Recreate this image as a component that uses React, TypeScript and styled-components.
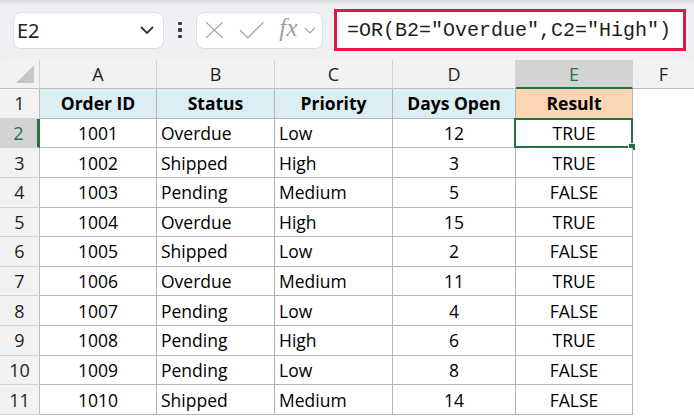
import React from 'react';
import styled, { createGlobalStyle, css } from 'styled-components';

const GlobalStyle = createGlobalStyle`
  body {
    margin: 0;
    background: #ffffff;
    overflow: hidden;
  }
`;

const green = '#217346';
const cellFont = `'Open Sans', 'Liberation Sans', sans-serif`;

type Align = 'left' | 'center';

interface Row {
  id: string;
  status: string;
  priority: string;
  days: number;
  result: string;
}

const rows: Row[] = [
  { id: '1001', status: 'Overdue', priority: 'Low', days: 12, result: 'TRUE' },
  { id: '1002', status: 'Shipped', priority: 'High', days: 3, result: 'TRUE' },
  { id: '1003', status: 'Pending', priority: 'Medium', days: 5, result: 'FALSE' },
  { id: '1004', status: 'Overdue', priority: 'High', days: 15, result: 'TRUE' },
  { id: '1005', status: 'Shipped', priority: 'Low', days: 2, result: 'FALSE' },
  { id: '1006', status: 'Overdue', priority: 'Medium', days: 11, result: 'TRUE' },
  { id: '1007', status: 'Pending', priority: 'Low', days: 4, result: 'FALSE' },
  { id: '1008', status: 'Pending', priority: 'High', days: 6, result: 'TRUE' },
  { id: '1009', status: 'Pending', priority: 'Low', days: 8, result: 'FALSE' },
  { id: '1010', status: 'Shipped', priority: 'Medium', days: 14, result: 'FALSE' },
];

const letters = ['A', 'B', 'C', 'D', 'E', 'F'];

const App = () => {
  return (
    <>
      <GlobalStyle />
      <Window>
        <FormulaBar>
          <NameBox>
            <span>E2</span>
            <Chevron width="16" height="10" viewBox="0 0 16 10">
              <path d="M2 2 L8 8 L14 2" />
            </Chevron>
          </NameBox>
          <Dots>
            <i />
            <i />
            <i />
          </Dots>
          <FuncBox>
            <svg width="19" height="18" viewBox="0 0 19 18">
              <path d="M1 1 L18 17 M18 1 L1 17" stroke="#a0a0a0" strokeWidth="1.3" fill="none" />
            </svg>
            <svg width="26" height="18" viewBox="0 0 26 18">
              <path d="M1 9 L9 17 L25 1" stroke="#a0a0a0" strokeWidth="1.3" fill="none" />
            </svg>
            <Fx>fx</Fx>
            <Chevron width="12" height="7" viewBox="0 0 12 7" $light>
              <path d="M1 1 L6 6 L11 1" />
            </Chevron>
          </FuncBox>
          <FormulaInput>=OR(B2="Overdue",C2="High")</FormulaInput>
        </FormulaBar>

        <Sheet>
          <Corner>
            <svg width="20" height="20" viewBox="0 0 20 20">
              <path d="M19 1 L19 19 L1 19 Z" fill="#c6c6c6" />
            </svg>
          </Corner>
          {letters.map((l) => (
            <ColHead key={l} $active={l === 'E'} $last={l === 'F'}>
              {l}
            </ColHead>
          ))}

          <RowHead>1</RowHead>
          <Cell $fill="#dbeef4" $bold>Order ID</Cell>
          <Cell $fill="#dbeef4" $bold>Status</Cell>
          <Cell $fill="#dbeef4" $bold>Priority</Cell>
          <Cell $fill="#dbeef4" $bold>Days Open</Cell>
          <Cell $fill="#fcd5b4" $bold>Result</Cell>
          <Blank />

          {rows.map((r, i) => (
            <React.Fragment key={r.id}>
              <RowHead $active={i === 0}>{i + 2}</RowHead>
              <Cell>{r.id}</Cell>
              <Cell $align="left">{r.status}</Cell>
              <Cell $align="left">{r.priority}</Cell>
              <Cell>{r.days}</Cell>
              <Cell $selected={i === 0}>{r.result}</Cell>
              <Blank />
            </React.Fragment>
          ))}
        </Sheet>
      </Window>
    </>
  );
};

const Window = styled.div`
  width: 694px;
  height: 416px;
  overflow: hidden;
  background: #ffffff;
`;

const FormulaBar = styled.div`
  height: 60px;
  display: flex;
  align-items: center;
  padding-left: 13px;
  box-sizing: border-box;
  background: #eef0f3;
  box-shadow: inset 0 5px 4px -3px rgba(0, 0, 0, 0.12);
`;

const NameBox = styled.div`
  width: 151px;
  height: 37px;
  box-sizing: border-box;
  background: #ffffff;
  border: 1px solid #dcdde0;
  border-radius: 8px;
  display: flex;
  align-items: center;
  justify-content: space-between;
  padding: 0 8px 0 3px;
  font-family: 'Noto Sans', 'Open Sans', sans-serif;
  font-size: 20px;
  color: #1e1e1e;
`;

const Chevron = styled.svg<{ $light?: boolean }>`
  fill: none;
  stroke: ${(p) => (p.$light ? '#a0a0a0' : '#333333')};
  stroke-width: ${(p) => (p.$light ? 1.3 : 1.8)};
`;

const Dots = styled.div`
  width: 32px;
  display: flex;
  flex-direction: column;
  align-items: center;
  gap: 3px;

  & i {
    width: 3.5px;
    height: 3.5px;
    background: #3a3a3a;
    border-radius: 1px;
  }
`;

const FuncBox = styled.div`
  width: 127px;
  height: 37px;
  box-sizing: border-box;
  background: #ffffff;
  border: 1px solid #dcdde0;
  border-radius: 8px;
  display: flex;
  align-items: center;
  padding: 0 6px 0 8px;
  gap: 15px;

  & svg:last-child {
    margin-left: -9px;
  }
`;

const Fx = styled.span`
  font-family: 'Liberation Serif', 'DejaVu Serif', serif;
  font-style: italic;
  font-size: 25px;
  color: #a0a0a0;
  letter-spacing: 0.5px;
  margin-top: -4px;
`;

const FormulaInput = styled.div`
  margin-left: 11px;
  width: 352px;
  height: 42px;
  box-sizing: border-box;
  border: 3px solid #e0174a;
  background: #ffffff;
  display: flex;
  align-items: center;
  padding-left: 10px;
  font-family: 'Liberation Mono', 'DejaVu Sans Mono', monospace;
  font-size: 20px;
  color: #1e1e1e;
  white-space: pre;
`;

const Sheet = styled.div`
  display: grid;
  grid-template-columns: 40px 117px 118px 118px 123px 117px 1fr;
  grid-template-rows: 29px repeat(11, 29.64px);
  font-family: ${cellFont};
  color: #000000;
`;

const Corner = styled.div`
  background: #f2f2f2;
  border-right: 1px solid #d4d4d4;
  border-bottom: 1px solid #bdbdbd;
  display: flex;
  align-items: flex-end;
  justify-content: flex-end;
  padding: 0 4px 4px 0;
  box-sizing: border-box;
`;

const ColHead = styled.div<{ $active?: boolean; $last?: boolean }>`
  background: #f2f2f2;
  border-right: ${(p) => (p.$last ? 'none' : '1px solid #d4d4d4')};
  border-bottom: 1px solid #bdbdbd;
  display: flex;
  align-items: center;
  justify-content: center;
  font-size: 18px;
  color: #1e1e1e;
  box-sizing: border-box;

  ${(p) =>
    p.$active &&
    css`
      background: #d3d3d3;
      color: ${green};
      border-bottom: 2px solid ${green};
    `}
`;

const RowHead = styled.div<{ $active?: boolean }>`
  background: #f2f2f2;
  border-right: 1px solid #bdbdbd;
  border-bottom: 1px solid #d4d4d4;
  display: flex;
  align-items: center;
  justify-content: center;
  font-size: 18px;
  color: #1e1e1e;
  box-sizing: border-box;

  ${(p) =>
    p.$active &&
    css`
      background: #d3d3d3;
      color: ${green};
      border-right: 3px solid ${green};
    `}
`;

const Cell = styled.div<{ $align?: Align; $fill?: string; $bold?: boolean; $selected?: boolean }>`
  position: relative;
  background: ${(p) => p.$fill || '#ffffff'};
  border-right: 1px solid #b4b4b4;
  border-bottom: 1px solid #b4b4b4;
  display: flex;
  align-items: center;
  justify-content: ${(p) => (p.$align === 'left' ? 'flex-start' : 'center')};
  padding-left: ${(p) => (p.$align === 'left' ? '4px' : '0')};
  font-size: 17.5px;
  font-weight: ${(p) => (p.$bold ? 700 : 400)};
  box-sizing: border-box;
  white-space: nowrap;

  ${(p) =>
    p.$selected &&
    css`
      &::before {
        content: '';
        position: absolute;
        left: -2px;
        top: -1px;
        right: -1px;
        bottom: -1px;
        border: 2px solid ${green};
      }
      &::after {
        content: '';
        position: absolute;
        right: -4px;
        bottom: -4px;
        width: 6px;
        height: 6px;
        background: ${green};
        border: 1px solid #ffffff;
      }
    `}
`;

const Blank = styled.div`
  background: #ffffff;
`;

export default App;
